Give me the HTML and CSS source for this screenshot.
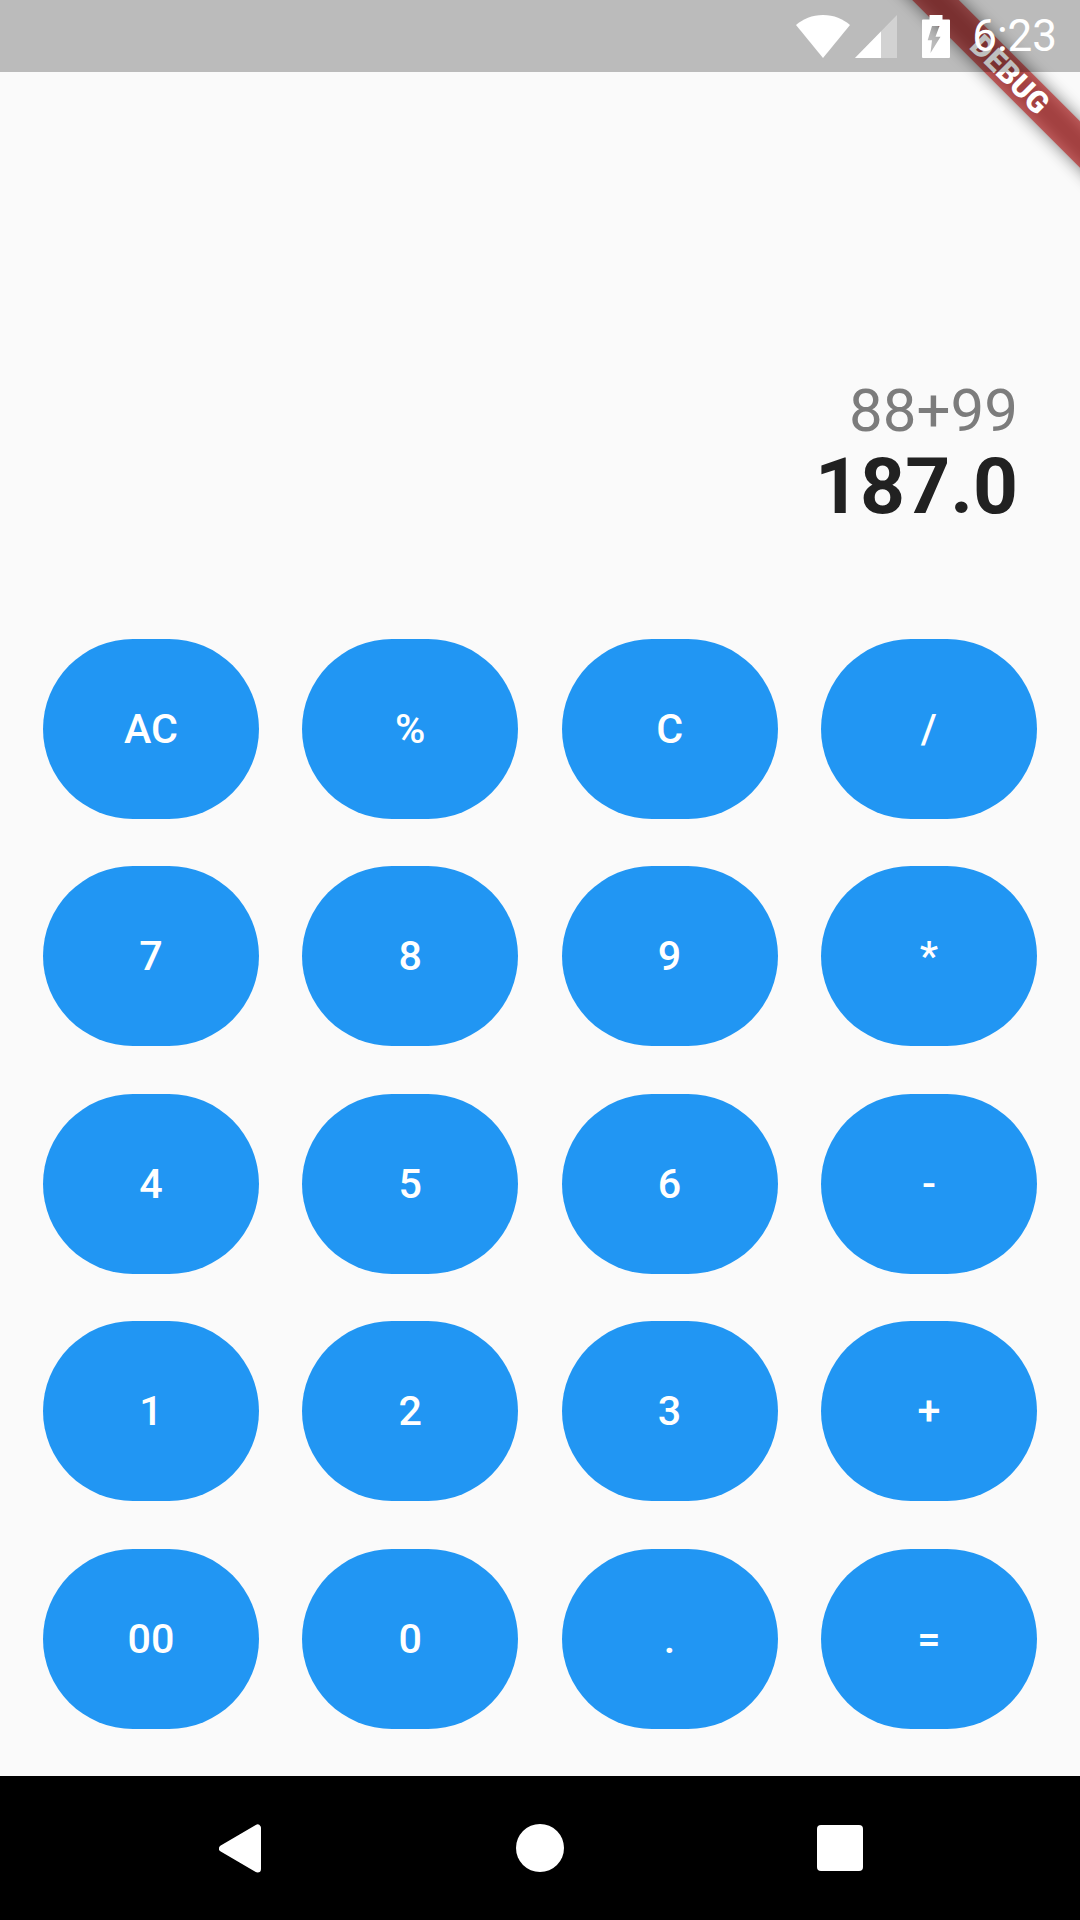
FILE: index.html
```html
<!DOCTYPE html>
<html lang="en">
<head>
    <meta charset="UTF-8">
    <meta name="viewport" content="width=device-width, initial-scale=1.0">
    <title>Calculator</title>
    <link rel="stylesheet" href="styles.css">
</head>
<body>
    <div id="screen">
        <div id="status-bar">
            <svg class="wifi" width="54" height="43" viewBox="0 0 54 43">
                <path d="M0 10C7 4 16 0 27 0S47 4 54 10L27 43Z" fill="#fff"/>
            </svg>
            <svg class="signal" width="42" height="43" viewBox="0 0 42 43">
                <path d="M42 0V43H0Z" fill="#fff" fill-opacity="0.35"/>
                <path d="M26 16.400V43H0Z" fill="#fff"/>
            </svg>
            <svg class="battery" width="28" height="43" viewBox="0 0 28 43">
                <path fill-rule="evenodd" fill="#fff" d="M7.500 0H20.500V4.500H27Q28 4.500 28 5.500V42Q28 43 27 43H1Q0 43 0 42V5.500Q0 4.500 1 4.500H7.500ZM10 11H17.500L13.500 21.700H18.500L8.500 38L10 25.300H5.700Z"/>
            </svg>
            <span id="clock">6:23</span>
        </div>

        <div id="debug-banner"><span>DEBUG</span></div>

        <div id="display">
            <div id="expression">88+99</div>
            <div id="result">187.0</div>
        </div>

        <div id="button-container">
            <button>AC</button>
            <button>%</button>
            <button>C</button>
            <button>/</button>
            <button>7</button>
            <button>8</button>
            <button>9</button>
            <button>*</button>
            <button>4</button>
            <button>5</button>
            <button>6</button>
            <button>-</button>
            <button>1</button>
            <button>2</button>
            <button>3</button>
            <button>+</button>
            <button>00</button>
            <button>0</button>
            <button>.</button>
            <button>=</button>
        </div>

        <div id="nav-bar">
            <svg width="42" height="49" viewBox="0 0 42 49">
                <path d="M38.500 4V45L3.500 24.500Z" fill="#fff" stroke="#fff" stroke-width="7" stroke-linejoin="round"/>
            </svg>
            <svg class="nav-home" width="48" height="48" viewBox="0 0 48 48">
                <circle cx="24" cy="24" r="24" fill="#fff"/>
            </svg>
            <svg width="46" height="46" viewBox="0 0 46 46">
                <rect width="46" height="46" rx="4" fill="#fff"/>
            </svg>
        </div>
    </div>
</body>
</html>
```

FILE: styles.css
```css
body {
    margin: 0;
    font-family: Roboto, sans-serif;
    background-color: #fafafa;
}
#screen {
    position: relative;
    display: flex;
    flex-direction: column;
    width: 1080px;
    height: 1920px;
    overflow: hidden;
}
#status-bar {
    position: relative;
    z-index: 2;
    display: flex;
    align-items: center;
    justify-content: flex-end;
    flex-shrink: 0;
    height: 72px;
    padding-right: 23px;
    box-sizing: border-box;
    background-color: rgba(0, 0, 0, 0.25);
}
.wifi {
    margin-right: 5px;
}
.signal {
    margin-right: 25px;
}
.battery {
    margin-right: 22px;
}
#clock {
    font-size: 44px;
    color: #fff;
}
#debug-banner {
    position: absolute;
    z-index: 1;
    top: 58px;
    left: 810px;
    display: flex;
    align-items: center;
    justify-content: center;
    width: 400px;
    height: 33px;
    transform: rotate(45deg);
}
/* shadow is blurred under the band too, so it can't be a box-shadow */
#debug-banner::before {
    content: "";
    position: absolute;
    inset: 0;
    background-color: rgba(0, 0, 0, 0.5);
    filter: blur(8px);
}
#debug-banner::after {
    content: "";
    position: absolute;
    inset: 0;
    background-color: rgba(183, 28, 28, 0.63);
}
#debug-banner span {
    position: relative;
    z-index: 1;
    font-size: 30.25px;
    font-weight: 900;
    line-height: 33px;
    color: #fff;
}
#display {
    display: flex;
    flex-direction: column;
    align-items: flex-end;
    justify-content: flex-end;
    flex-shrink: 0;
    height: 567px;
    padding: 0 62px 110px 0;
    box-sizing: border-box;
}
#expression {
    font-size: 60px;
    line-height: 64px;
    color: #7c7c7c;
}
#result {
    font-size: 78.500px;
    font-weight: 700;
    line-height: 86px;
    color: #212121;
}
#button-container {
    display: grid;
    grid-template-columns: repeat(4, 216px);
    grid-auto-rows: 180px;
    column-gap: 43.3px;
    row-gap: 47.4px;
    padding-left: 43px;
}
button {
    padding: 0;
    border: none;
    border-radius: 90px;
    background-color: #2196f3;
    color: #fff;
    font-family: Roboto, sans-serif;
    font-size: 41.25px;
    font-weight: 500;
}
#nav-bar {
    display: flex;
    align-items: center;
    margin-top: auto;
    height: 144px;
    padding-left: 219px;
    background-color: #000;
}
.nav-home {
    margin: 0 253px 0 255px;
}
```
